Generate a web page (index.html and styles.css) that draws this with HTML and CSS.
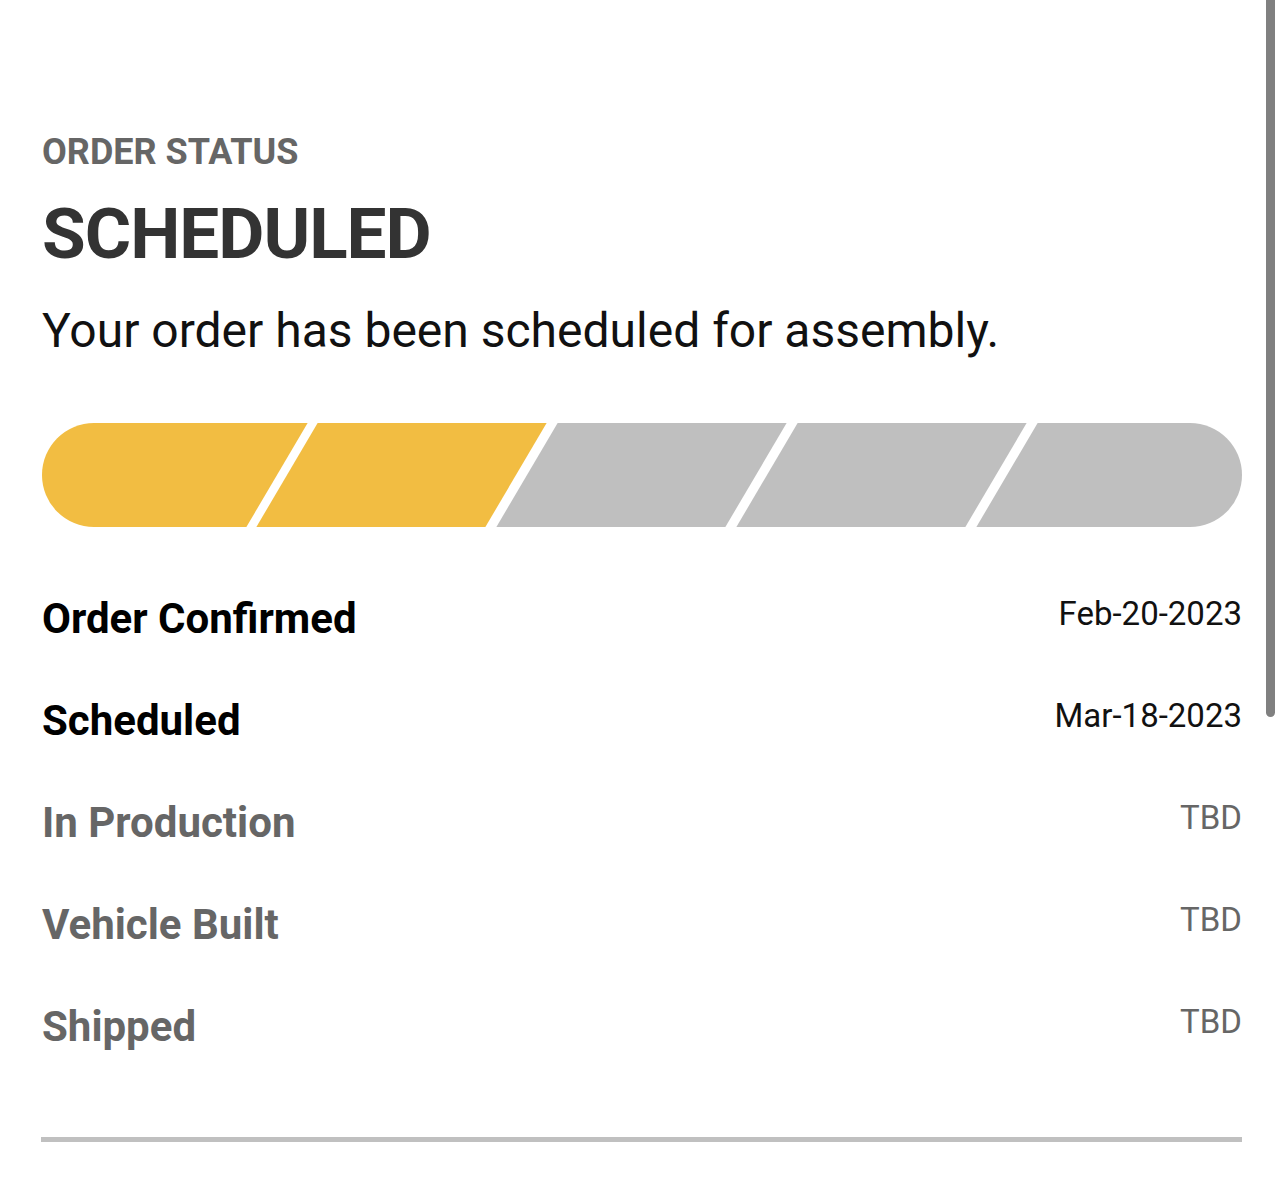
FILE: index.html
```html
<!DOCTYPE html>
<html lang="en">
<head>
<meta charset="utf-8">
<title>Order Status</title>
<link rel="stylesheet" href="styles.css">
</head>
<body>
<main class="status">
  <div class="eyebrow">ORDER STATUS</div>
  <h1 class="headline">SCHEDULED</h1>
  <p class="desc">Your order has been scheduled for assembly.</p>
  <div class="track">
    <div class="seg seg-first done"></div>
    <div class="seg done"></div>
    <div class="seg"></div>
    <div class="seg"></div>
    <div class="seg seg-last"></div>
  </div>
  <ul class="steps">
    <li class="step done"><span class="label">Order Confirmed</span><span class="date">Feb-20-2023</span></li>
    <li class="step done"><span class="label">Scheduled</span><span class="date">Mar-18-2023</span></li>
    <li class="step"><span class="label">In Production</span><span class="date">TBD</span></li>
    <li class="step"><span class="label">Vehicle Built</span><span class="date">TBD</span></li>
    <li class="step"><span class="label">Shipped</span><span class="date">TBD</span></li>
  </ul>
  <hr class="divider">
</main>
<div class="scrollbar"></div>
</body>
</html>
```
FILE: styles.css
```css
html, body {
  margin: 0;
  padding: 0;
  background: #ffffff;
}
body {
  font-family: Roboto, "Liberation Sans", Arial, sans-serif;
  overflow: hidden;
}
.status {
  padding: 130px 42px 0 42px;
}
.eyebrow {
  font-size: 36px;
  line-height: 44px;
  font-weight: 700;
  color: #666666;
}
.headline {
  margin: 20px 0 0 0;
  font-size: 71px;
  line-height: 80px;
  font-weight: 700;
  letter-spacing: -1px;
  color: #333333;
}
.desc {
  margin: 29px 0 0 0;
  font-size: 48px;
  line-height: 56px;
  font-weight: 400;
  color: #111111;
}
.track {
  margin-top: 64px;
  margin-left: -0.5px;
  height: 104px;
  border-radius: 52px;
  overflow: hidden;
  display: flex;
  gap: 11px;
}
.seg {
  flex: none;
  width: 229px;
  height: 100%;
  background: #bfbfbf;
  transform: skewX(-30.5deg);
}
.seg.done {
  background: #f2bd42;
}
.seg-first {
  width: 294.5px;
  margin-left: -60px;
}
.seg-last {
  flex: 1;
  margin-right: -60px;
}
.steps {
  list-style: none;
  margin: 67px 0 0 0;
  padding: 0;
  display: flex;
  flex-direction: column;
  gap: 52px;
}
.step {
  display: flex;
  justify-content: space-between;
  align-items: flex-start;
  height: 50px;
}
.label {
  font-size: 42px;
  line-height: 50px;
  font-weight: 700;
  color: #666666;
}
.date {
  margin-top: -1px;
  font-size: 33px;
  line-height: 42px;
  font-weight: 400;
  color: #666666;
}
.step.done .label {
  color: #000000;
}
.step.done .date {
  color: #111111;
}
.divider {
  margin: 85px 0 0 -1px;
  border: 0;
  height: 5px;
  background: #c0c0c0;
}
.scrollbar {
  position: fixed;
  top: 0;
  right: 9px;
  width: 9px;
  height: 717px;
  background: #808080;
  border-radius: 0 0 5px 5px;
}
```
